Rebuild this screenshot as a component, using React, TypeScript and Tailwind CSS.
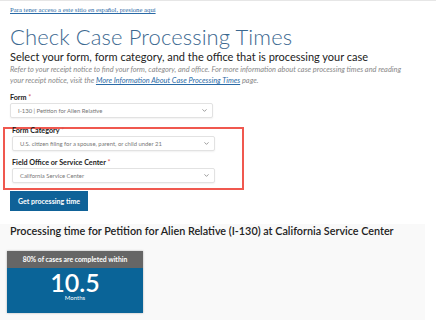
import { ChevronDown } from 'lucide-react';

const SELECTS = [
  { label: 'Form', value: 'I-130 | Petition for Alien Relative' },
  { label: 'Form Category', value: 'U.S. citizen filing for a spouse, parent, or child under 21' },
  { label: 'Field Office or Service Center', value: 'California Service Center' },
];

function Field({ label, value }: { label: string; value: string }) {
  return (
    <div className="flex flex-col">
      <div className="text-[7.2px] font-bold text-[#222] leading-[9px] h-[9px]">
        {label} <span className="text-[#d9534f] font-normal">*</span>
      </div>
      <div className="mt-[1px] w-[203px] h-[15px] flex items-center justify-between border border-[#e2e2e2] rounded-[2px] bg-white shadow-[0_1px_2px_rgba(0,0,0,0.06)] pl-[7px] pr-[4px]">
        <span className="text-[5.9px] text-[#777]">{value}</span>
        <ChevronDown size={7} strokeWidth={2.5} className="text-[#777]" />
      </div>
    </div>
  );
}

export default function App() {
  return (
    <div className="w-[436px] h-[320px] bg-white overflow-hidden border-t border-[#e6e6e6] font-['Lato',sans-serif] leading-none">
      <div className="pl-[10px] pt-[4px]">
        <a className="block text-[6.7px] leading-[9px] text-[#2a6aa6] underline font-['Liberation_Serif',serif]">
          Para tener acceso a este sitio en español, presione aquí
        </a>
        <h1 className="mt-[11px] text-[22px] leading-[24px] font-light text-[#3c6890] tracking-[0.1px]">
          Check Case Processing Times
        </h1>
        <h2 className="text-[11px] leading-[12px] text-[#222] mt-[2px]">
          Select your form, form category, and the office that is processing your case
        </h2>
        <p className="mt-[1px] text-[7.4px] leading-[11px] italic text-[#888] w-[405px]">
          Refer to your receipt notice to find your form, category, and office. For more information about case processing times and reading your receipt notice, visit the{' '}
          <span className="text-[#2a6aa6] underline">More Information About Case Processing Times</span> page.
        </p>
      </div>

      <div className="pl-[10px] mt-[7px]">
        <Field label={SELECTS[0].label} value={SELECTS[0].value} />
        <div className="mt-[9px] -ml-[7px] pl-[7px] w-[241px] h-[63px] border-2 border-[#f0584f]">
          <div className="-mt-[3px]">
            <Field label={SELECTS[1].label} value={SELECTS[1].value} />
          </div>
          <div className="mt-[7px]">
            <Field label={SELECTS[2].label} value={SELECTS[2].value} />
          </div>
        </div>
        <button className="block mt-[1px] w-[78px] h-[20px] bg-[#0f6298] text-white text-[7px] font-bold">
          Get processing time
        </button>
      </div>

      <div className="mt-[13px] w-[425px] h-[100px] bg-[#f9f9f9] pl-[10px]">
        <h3 className="text-[10.8px] leading-[14px] font-semibold text-[#222]">
          Processing time for Petition for Alien Relative (I-130) at California Service Center
        </h3>
        <div className="mt-[13px] -ml-[3px] w-[136px] h-[62px] flex flex-col shadow-[0_0_2px_rgba(0,0,0,0.3)]">
          <div className="h-[17px] bg-[#666] text-white text-[6.8px] font-bold flex items-center justify-center">
            80% of cases are completed within
          </div>
          <div className="flex-1 bg-[#0a6498] text-white flex flex-col items-center">
            <div className="text-[25px] leading-[21px] mt-[4px] font-semibold">10.5</div>
            <div className="text-[6px] leading-[7px] mt-[1px]">Months</div>
          </div>
        </div>
      </div>
    </div>
  );
}
